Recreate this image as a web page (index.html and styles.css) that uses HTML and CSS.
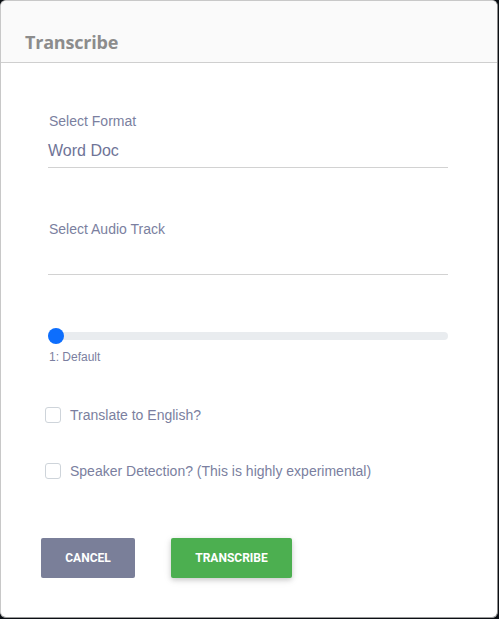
FILE: index.html
```html
<!DOCTYPE html>
<html>
<head>
<meta charset="utf-8">
<link rel="stylesheet" href="styles.css">
</head>
<body>
<div class="modal">
  <div class="modal-header">
    <h2 class="modal-title">Transcribe</h2>
  </div>
  <div class="modal-body">
    <div class="field">
      <label class="field-label">Select Format</label>
      <div class="field-value">Word Doc</div>
    </div>
    <div class="field field-audio">
      <label class="field-label">Select Audio Track</label>
      <div class="field-value"></div>
    </div>
    <div class="slider">
      <div class="slider-track"><span class="slider-thumb"></span></div>
      <div class="slider-caption">1: Default</div>
    </div>
    <label class="check check-first"><span class="box"></span><span>Translate to English?</span></label>
    <label class="check"><span class="box"></span><span>Speaker Detection? (This is highly experimental)</span></label>
    <div class="actions">
      <button class="btn btn-cancel">Cancel</button>
      <button class="btn btn-primary">Transcribe</button>
    </div>
  </div>
</div>
</body>
</html>
```
FILE: styles.css
```css
html, body {
  margin: 0;
  padding: 0;
  background: #0b0f14;
  width: 499px;
  height: 619px;
  overflow: hidden;
}
.modal {
  box-sizing: border-box;
  width: 498px;
  height: 618px;
  background: #fff;
  border: 1px solid #c8c8c8;
  border-right-color: #8a8a8a;
  border-bottom-color: #9a9a9a;
  border-radius: 6px;
  overflow: hidden;
  display: flex;
  flex-direction: column;
}
.modal-header {
  background: #fafafa;
  border-bottom: 1px solid #cfcfcf;
  height: 61px;
  padding: 0 24px;
  display: flex;
  align-items: flex-end;
}
.modal-title {
  margin: 0 0 8px;
  font-family: "Open Sans", sans-serif;
  font-weight: 700;
  font-size: 18px;
  line-height: 24px;
  color: #8c8c8c;
  letter-spacing: -0.2px;
}
.modal-body {
  padding: 48px 48px 0 47px;
  font-family: "Liberation Sans", Arial, sans-serif;
  color: #7b7fa0;
}
.field {
  width: 400px;
  border-bottom: 1px solid #d2d2d2;
}
.field-label {
  display: block;
  font-size: 14px;
  line-height: 20px;
  padding-left: 1px;
}
.field-value {
  font-size: 16px;
  line-height: 20px;
  height: 20px;
  margin-top: 10px;
  padding-bottom: 6px;
  color: #6f7497;
}
.field-audio {
  margin-top: 51px;
}
.field-audio .field-value {
  margin-top: 7px;
  padding-bottom: 8px;
}
.slider {
  width: 400px;
  margin-top: 57px;
}
.slider-track {
  height: 8px;
  border-radius: 4px;
  background: #e9ecef;
  position: relative;
}
.slider-thumb {
  position: absolute;
  left: 0;
  top: -4px;
  width: 16px;
  height: 16px;
  border-radius: 50%;
  background: #0d6efd;
}
.slider-caption {
  font-size: 12px;
  line-height: 14px;
  margin-top: 10px;
  padding-left: 1px;
}
.check {
  display: flex;
  align-items: center;
  gap: 9px;
  font-size: 14px;
  line-height: 18px;
  margin-left: -3px;
  margin-top: 38px;
}
.check-first {
  margin-top: 42px;
}
.box {
  box-sizing: border-box;
  width: 16px;
  height: 16px;
  border: 1px solid #ced4da;
  border-radius: 3px;
  background: #fff;
}
.actions {
  display: flex;
  gap: 36px;
  margin-top: 58px;
  margin-left: -7px;
}
.btn {
  border: none;
  border-radius: 2px;
  height: 40px;
  color: #fff;
  font-family: Roboto, sans-serif;
  font-weight: 700;
  font-size: 12px;
  text-transform: uppercase;
  padding: 0;
}
.btn-cancel {
  width: 94px;
  background: #7a7f99;
}
.btn-primary {
  width: 121px;
  background: #4caf50;
  box-shadow: 0 2px 5px rgba(0,0,0,.16), 0 2px 10px rgba(0,0,0,.08);
}
```
